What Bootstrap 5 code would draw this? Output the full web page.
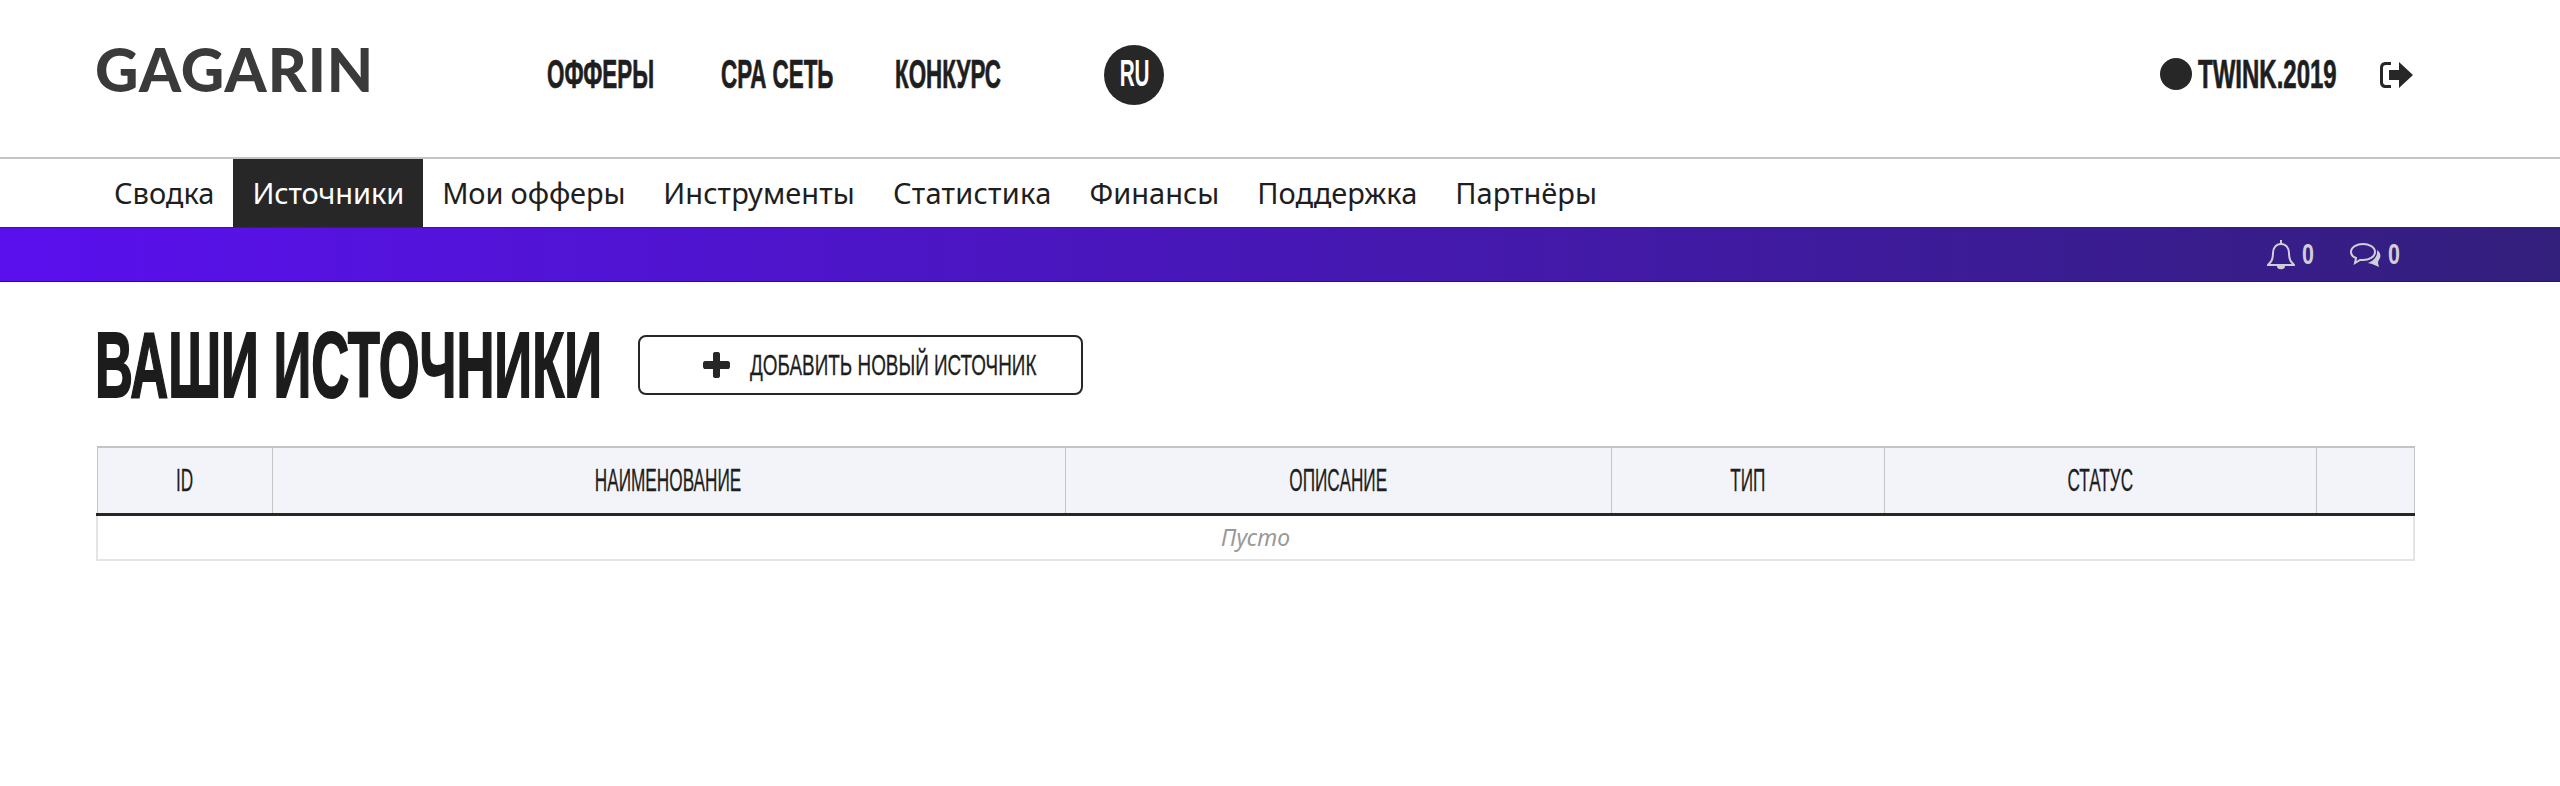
<!DOCTYPE html>
<html lang="en">
<head>
    <meta charset="UTF-8">
    <title>Gagarin</title>
    <meta name="viewport" content="width=device-width, initial-scale=1">
    <link href="https://cdn.jsdelivr.net/npm/bootstrap@5.3.0/dist/css/bootstrap.min.css" rel="stylesheet">
    <style>
        body { background: #fff; color: #1e1e1e; font-family: "Noto Sans", sans-serif; }
        .cond { font-family: "Liberation Sans", sans-serif; display: inline-block; white-space: nowrap; }
        .top-head { height: 157px; padding: 0 146px 7px 95px; }
        .logo { font-family: Lato, sans-serif; font-weight: 900; font-size: 60px; line-height: 1; color: #3a3a3a; width: 452px; letter-spacing: 1px; margin-top: -12px; }
        .top-link { font-size: 40px; line-height: 1; font-weight: 700; color: #1e1e1e; text-decoration: none; transform: scaleX(.56); transform-origin: left center; -webkit-text-stroke: .7px #1e1e1e; margin-top: -3px; }
        .top-item { width: 174px; }
        .top-item-wide { width: 209px; }
        .lang-round { width: 60px; height: 60px; background: #272727; color: #fff; font-size: 37px; font-weight: 700; line-height: 1; }
        .lang-round .cond { transform: scaleX(.56); width: 53px; text-align: center; margin-top: -3px; }
        .user-dot { width: 32px; height: 32px; background: #272727; margin-top: -2px; }
        .user-name { width: 182px; margin-left: 6px; }
        .user-name .top-link { transform: scaleX(.6); }
        .menu-row { height: 70px; border-top: 2px solid #c4c4c4; padding-left: 95px; }
        .menu-row a { color: #1e1e1e; text-decoration: none; font-size: 29px; padding: 0 19px; height: 68px; display: flex; align-items: center; }
        .menu-row a.current { background: #272727; color: #fff; letter-spacing: -.1px; }
        .menu-row a:nth-child(3) { letter-spacing: -.16px; }
        .menu-row a:nth-child(4) { letter-spacing: .1px; }
        .menu-row a:nth-child(5) { letter-spacing: .25px; }
        .grad-bar { height: 55px; background: linear-gradient(90deg, #5a10ee 0%, #331f7c 100%); border-top: 1px solid #3a1a8c; border-bottom: 1px solid #2a1668; color: #cfcfd8; padding-right: 157px; }
        .bar-num { font-size: 29px; font-weight: 700; line-height: 1; width: 15px; transform: scaleX(.74); transform-origin: left center; }
        .bar-bell { margin-right: 7px; }
        .bar-chat { margin: 0 6px 0 33px; }
        .page-main { padding: 37px 145px 0 95px; }
        .title-big { font-family: "Liberation Sans", sans-serif; font-weight: 700; font-size: 93px; line-height: 1; margin: 0; color: #1c1c1c; width: 543px; white-space: nowrap; transform: scaleX(.565); transform-origin: left center; -webkit-text-stroke: 2px #1c1c1c; }
        .add-btn { width: 445px; height: 60px; border: 2px solid #272727; border-radius: 8px; background: #fff; color: #1e1e1e; padding: 0 0 0 63px; gap: 20px; margin-top: -1px; }
        .add-btn .cond { font-size: 30px; line-height: 1; width: 286px; transform: scaleX(.63); transform-origin: left center; -webkit-text-stroke: .3px #1e1e1e; }
        .src-table { width: calc(100% - 1px); margin-left: 1px; table-layout: fixed; border-collapse: collapse; margin-top: 34px; }
        .src-table th { background: #f3f4fa; border: 1px solid #c4c4c4; border-top-width: 2px; border-bottom: 3px solid #272727; height: 67px; text-align: center; vertical-align: middle; padding: 1px 0 0; font-weight: 400; }
        .src-table th .cond { font-size: 31px; line-height: 1; transform: scaleX(.555); -webkit-text-stroke: .3px #1e1e1e; }
        .src-table td { height: 46px; padding: 0; border: 2px solid #e4e4e4; border-top: 0; text-align: center; vertical-align: middle; color: #999; font-style: italic; font-size: 23px; }
    </style>
</head>
<body>

<!-- шапка -->
<header class="top-head d-flex align-items-center">
    <div class="logo">GAGARIN</div>
    <div class="top-item"><a class="top-link cond" href="#">ОФФЕРЫ</a></div>
    <div class="top-item"><a class="top-link cond" href="#">СРА СЕТЬ</a></div>
    <div class="top-item-wide"><a class="top-link cond" href="#">КОНКУРС</a></div>
    <div class="lang-round rounded-circle d-flex align-items-center justify-content-center"><span class="cond">RU</span></div>
    <div class="ms-auto d-flex align-items-center">
        <span class="user-dot rounded-circle"></span>
        <span class="user-name"><a class="top-link cond" href="#">TWINK.2019</a></span>
        <svg width="34" height="28" viewBox="0 0 34 28" fill="#272727"><path d="M11 1H6C2 1 0 3 0 7v14c0 4 2 6 6 6h5v-3H6c-2 0-3-1-3-3V7c0-2 1-3 3-3h5z"/><path d="M9 9h10V1l14 13-14 13v-8H9z"/></svg>
    </div>
</header>

<!-- меню -->
<nav class="menu-row d-flex">
    <a href="#">Сводка</a>
    <a href="#" class="current">Источники</a>
    <a href="#">Мои офферы</a>
    <a href="#">Инструменты</a>
    <a href="#">Статистика</a>
    <a href="#">Финансы</a>
    <a href="#">Поддержка</a>
    <a href="#">Партнёры</a>
</nav>

<div class="grad-bar d-flex align-items-center justify-content-end">
    <svg class="bar-bell" width="28" height="31" viewBox="0 0 28 31" fill="none" stroke="#cfcfd8" stroke-width="2"><path d="M1 26c3-3 5-5 5-12 0-5 3-9 8-9s8 4 8 9c0 7 2 9 5 12z"/><path d="M14 1v4"/><path d="M11 27c0 3 6 3 6 0z" fill="#cfcfd8"/></svg>
    <span class="bar-num cond">0</span>
    <svg class="bar-chat" width="32" height="26" viewBox="0 0 32 26" fill="none" stroke="#cfcfd8" stroke-width="2"><path d="M13 2c6 0 12 3 12 8s-6 8-12 8c-1 0-2 0-3 0l-5 3 1-5c-3-1-5-3-5-6 0-5 6-8 12-8z"/><path d="M27 8c3 2 4 5 3 8-1 2-2 3-2 5l1 4-7-3-4-1c5-2 10-6 9-13z" fill="#cfcfd8" stroke="none"/></svg>
    <span class="bar-num cond">0</span>
</div>

<!-- основной блок -->
<main class="page-main">
    <div class="d-flex align-items-center">
        <h1 class="title-big">ВАШИ ИСТОЧНИКИ</h1>
        <button class="add-btn d-flex align-items-center" type="button">
            <svg width="27" height="26" viewBox="0 0 27 26" fill="#272727"><path d="M10 2c0-3 7-3 7 0v7h8c3 0 3 8 0 8h-8v7c0 3-7 3-7 0v-7H2c-3 0-3-8 0-8h8z"/></svg>
            <span class="cond">ДОБАВИТЬ НОВЫЙ ИСТОЧНИК</span>
        </button>
    </div>

    <table class="src-table">
        <colgroup>
            <col style="width:175px"><col style="width:793px"><col style="width:546px"><col style="width:273px"><col style="width:432px"><col>
        </colgroup>
        <thead>
            <tr>
                <th><span class="cond">ID</span></th>
                <th><span class="cond">НАИМЕНОВАНИЕ</span></th>
                <th><span class="cond">ОПИСАНИЕ</span></th>
                <th><span class="cond">ТИП</span></th>
                <th><span class="cond">СТАТУС</span></th>
                <th></th>
            </tr>
        </thead>
        <tbody>
            <tr><td colspan="6">Пусто</td></tr>
        </tbody>
    </table>
</main>

<script src="https://cdn.jsdelivr.net/npm/bootstrap@5.3.0/dist/js/bootstrap.bundle.min.js"></script>
</body>
</html>
